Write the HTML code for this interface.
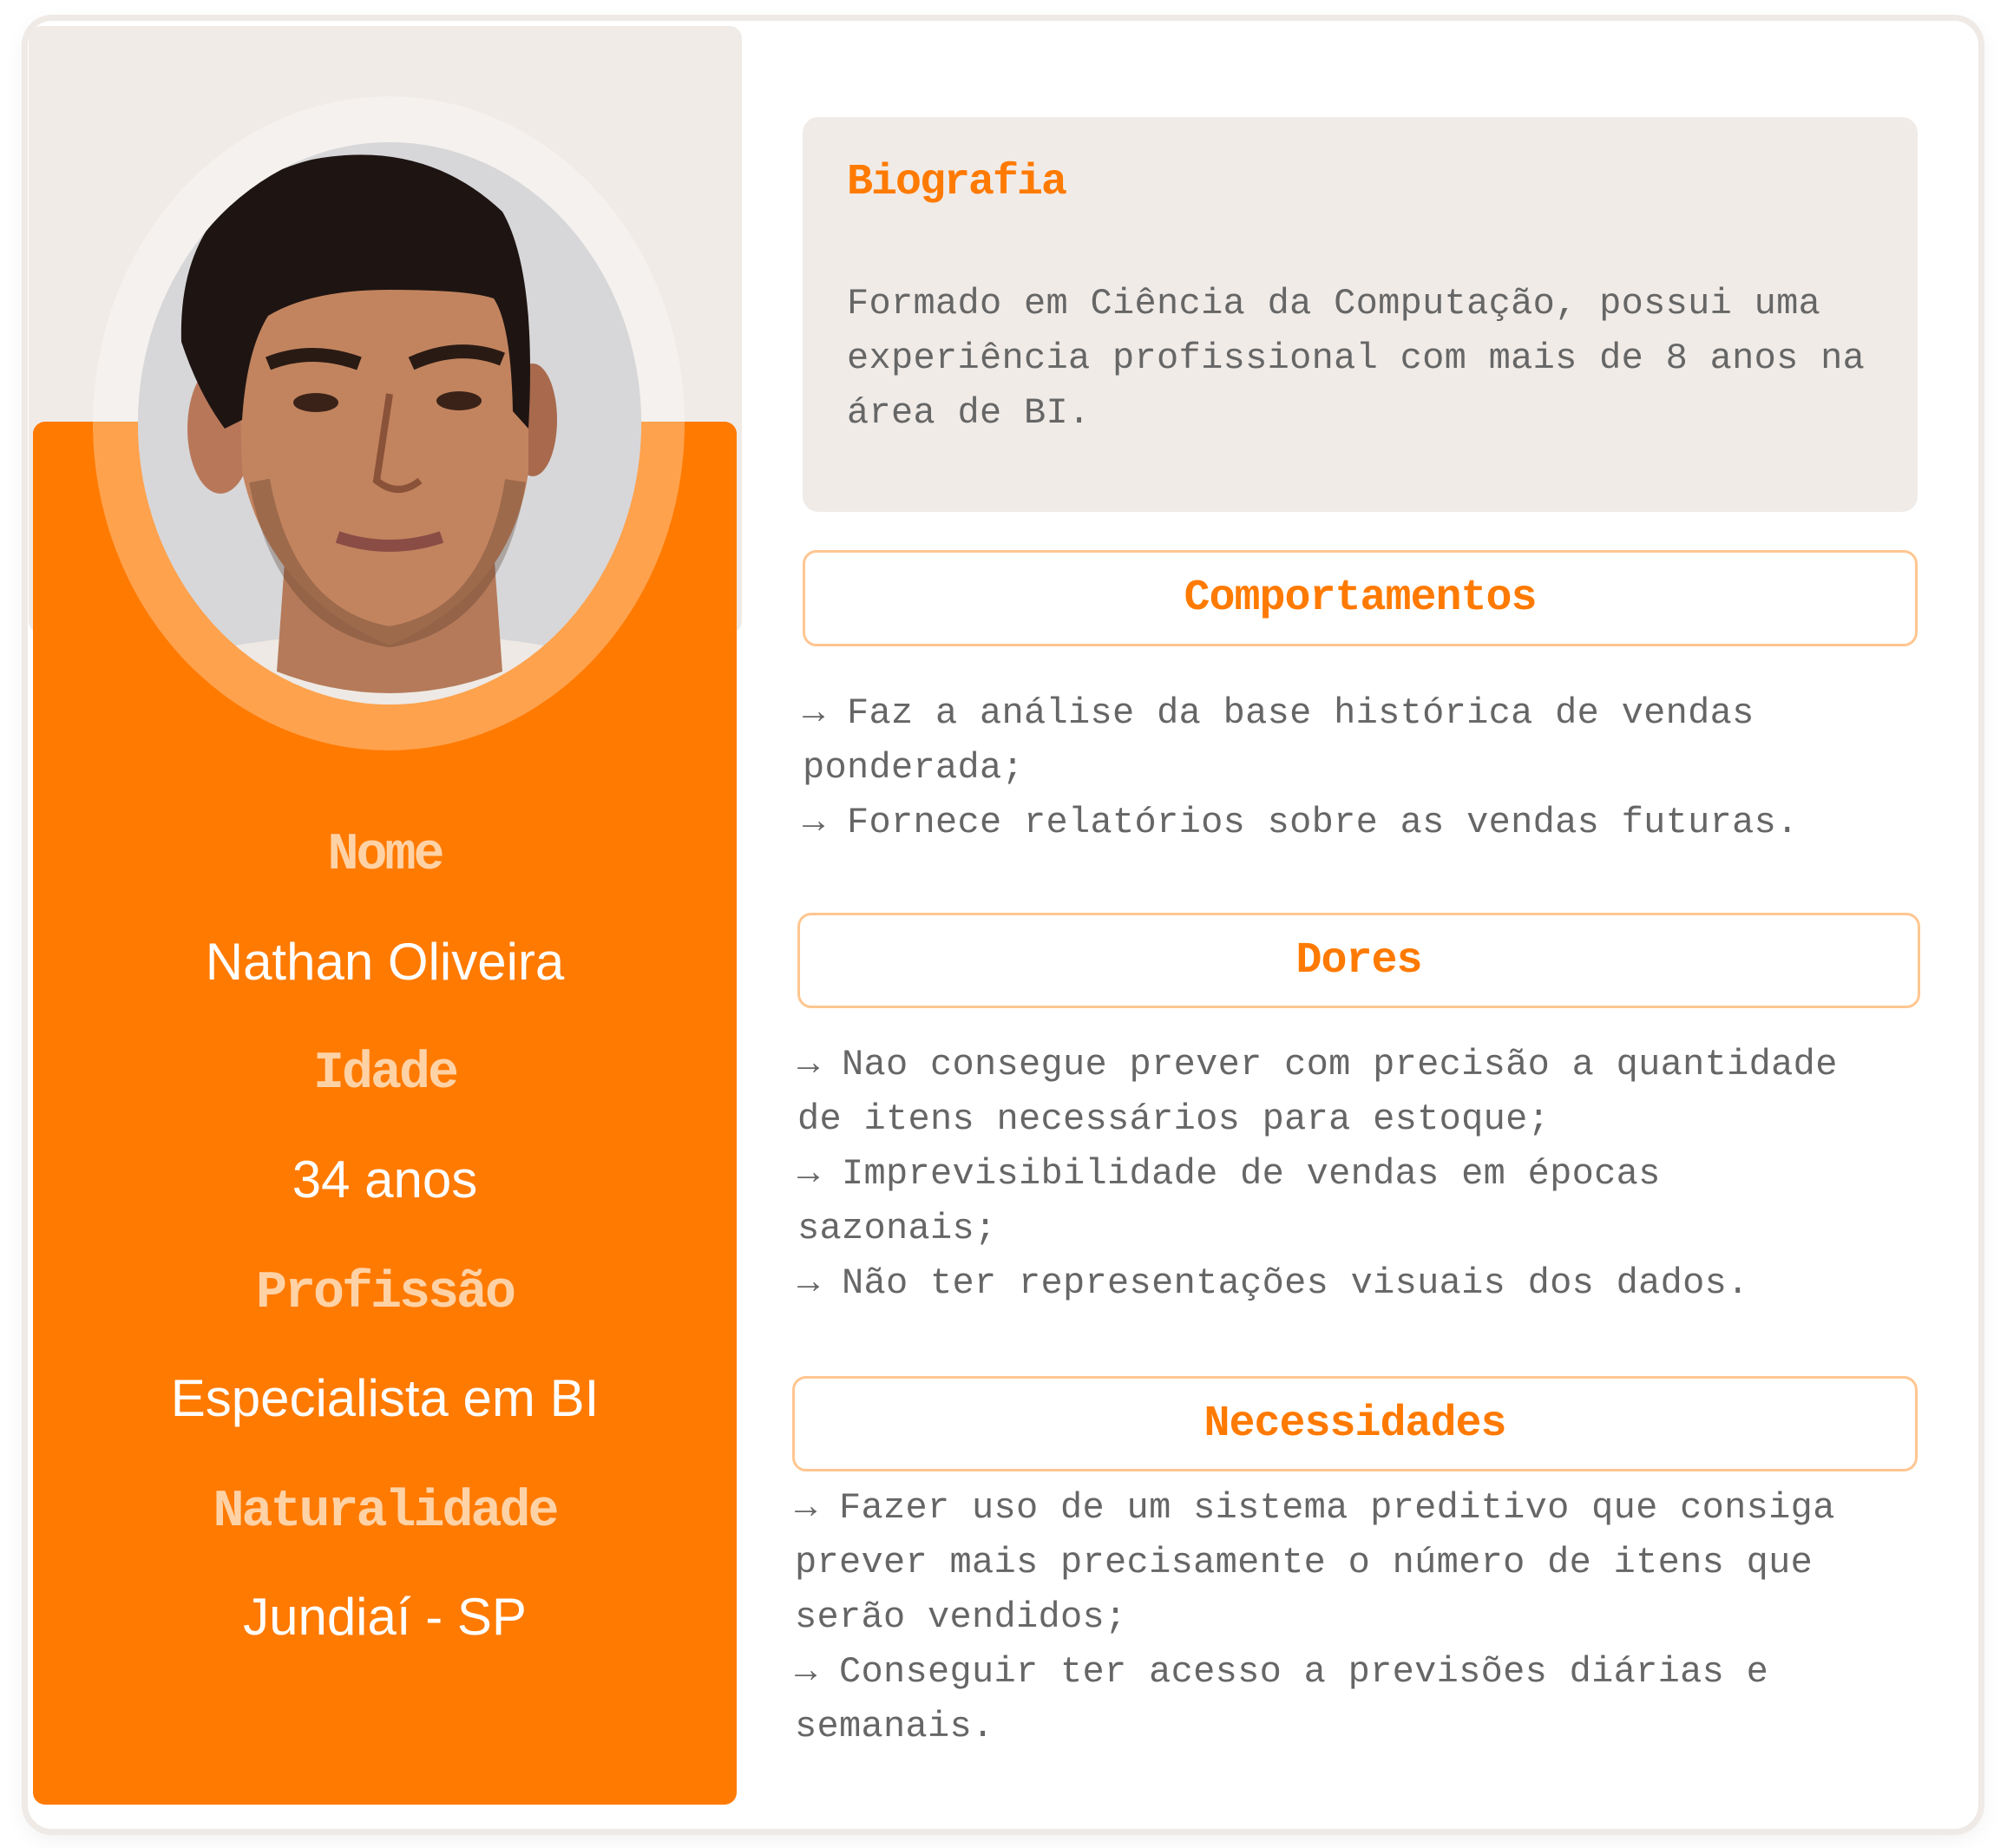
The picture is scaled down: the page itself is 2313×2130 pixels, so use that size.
<!DOCTYPE html>
<html><head><meta charset="utf-8"><style>
*{margin:0;padding:0;box-sizing:border-box}
body{width:2313px;height:2130px;background:#fff;position:relative;overflow:hidden;font-family:"Liberation Mono",monospace}
.card{position:absolute;left:32px;top:24px;width:2248px;height:2084px;background:#fff;border-radius:28px;box-shadow:0 0 0 7px #efeae6,0 8px 30px rgba(0,0,0,0.08)}
.beige{position:absolute;left:33px;top:30px;width:822px;height:700px;background:#f0ebe7;border-radius:14px}
.orange{position:absolute;left:38px;top:486px;width:811px;height:1594px;background:#ff7a00;border-radius:14px}
.ring{position:absolute;left:107px;top:111px;width:682px;height:754px;border-radius:50%;background:rgba(255,255,255,0.3)}
.photo{position:absolute;left:159px;top:164px;width:580px;height:648px;border-radius:50%;overflow:hidden;background:#d6d6d8}
.lab{position:absolute;left:38px;width:811px;text-align:center;color:#ffd2a6;font-weight:bold;font-size:60px;font-family:"Liberation Mono",monospace;letter-spacing:-3px}
.val{position:absolute;left:38px;width:811px;text-align:center;color:#fff;font-size:60px;font-family:"Liberation Sans",sans-serif;font-weight:300}
.bio{position:absolute;left:925px;top:135px;width:1285px;height:455px;background:#f0ebe7;border-radius:18px}
.h{position:absolute;color:#ff7a00;font-weight:bold;font-size:50px;letter-spacing:-2px}
.box{position:absolute;border:3px solid #ffc690;border-radius:16px;background:#fff;display:flex;align-items:center;justify-content:center;color:#ff7a00;font-weight:bold;font-size:50px;letter-spacing:-1px}
.t{position:absolute;color:#666;font-size:42px;white-space:nowrap;line-height:63px;letter-spacing:0.3px}
</style></head><body>
<div class="card"></div>
<div class="beige"></div>
<div class="orange"></div>
<div class="ring"></div>
<div class="photo"><svg width="580" height="648" viewBox="0 0 580 648">
<rect width="580" height="648" fill="#d7d7d9"/>
<path d="M60 590 Q290 540 520 590 L540 648 L40 648Z" fill="#eee9e4"/>
<path d="M170 470 L410 470 L420 610 Q290 660 160 610Z" fill="#b57a5a"/>
<ellipse cx="95" cy="330" rx="38" ry="75" fill="#b9775a"/>
<ellipse cx="455" cy="320" rx="28" ry="65" fill="#a8694d"/>
<path d="M115 200 Q120 110 290 100 Q440 110 450 200 L450 380 Q430 520 290 580 Q150 520 120 380Z" fill="#c2845f"/>
<path d="M50 230 Q45 60 200 20 Q330 -5 420 80 Q460 150 450 330 L432 310 Q430 210 410 180 Q380 170 290 170 Q200 170 150 200 Q125 240 120 320 L100 330 Q70 290 50 230Z" fill="#1e1512"/>
<path d="M150 255 Q200 235 255 255" stroke="#2a1a14" stroke-width="16" fill="none"/>
<path d="M315 255 Q370 230 420 250" stroke="#2a1a14" stroke-width="16" fill="none"/>
<ellipse cx="205" cy="300" rx="26" ry="11" fill="#3a2218"/>
<ellipse cx="370" cy="298" rx="26" ry="11" fill="#3a2218"/>
<path d="M290 290 L275 390 Q300 410 325 390" stroke="#8a5238" stroke-width="8" fill="none"/>
<path d="M230 455 Q290 475 350 455" stroke="#8a4d45" stroke-width="14" fill="none"/>
<path d="M140 390 Q170 550 290 570 Q410 550 435 390" stroke="#4a2e22" stroke-width="24" fill="none" opacity="0.3"/>
</svg></div>
<div class="lab" style="top:952px">Nome</div>
<div class="val" style="top:1074px">Nathan Oliveira</div>
<div class="lab" style="top:1204px">Idade</div>
<div class="val" style="top:1325px">34 anos</div>
<div class="lab" style="top:1457px">Profissão</div>
<div class="val" style="top:1577px">Especialista em BI</div>
<div class="lab" style="top:1709px">Naturalidade</div>
<div class="val" style="top:1829px">Jundiaí - SP</div>

<div class="bio"></div>
<div class="h" style="left:976px;top:182px">Biografia</div>
<div class="t" style="left:976px;top:319px">Formado em Ciência da Computação, possui uma<br>experiência profissional com mais de 8 anos na<br>área de BI.</div>

<div class="box" style="left:925px;top:634px;width:1285px;height:111px">Comportamentos</div>
<div class="t" style="left:925px;top:791px">→ Faz a análise da base histórica de vendas<br>ponderada;<br>→ Fornece relatórios sobre as vendas futuras.</div>

<div class="box" style="left:919px;top:1052px;width:1294px;height:110px">Dores</div>
<div class="t" style="left:919px;top:1196px">→ Nao consegue prever com precisão a quantidade<br>de itens necessários para estoque;<br>→ Imprevisibilidade de vendas em épocas<br>sazonais;<br>→ Não ter representações visuais dos dados.</div>

<div class="box" style="left:913px;top:1586px;width:1297px;height:110px">Necessidades</div>
<div class="t" style="left:916px;top:1707px">→ Fazer uso de um sistema preditivo que consiga<br>prever mais precisamente o número de itens que<br>serão vendidos;<br>→ Conseguir ter acesso a previsões diárias e<br>semanais.</div>
</body></html>
